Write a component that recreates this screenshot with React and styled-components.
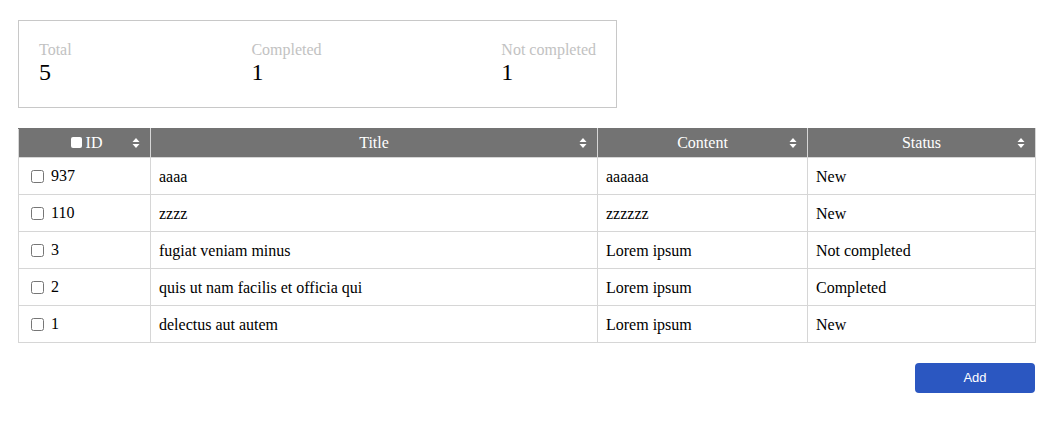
import React from "react";
import styled, { createGlobalStyle } from "styled-components";

const Global = createGlobalStyle`
  html, body { margin: 0; padding: 0; background: #fff; }
  body { font-family: "Liberation Serif", "Times New Roman", serif; color: #000; }
`;

const Page = styled.div`
  padding: 20px 26px 20px 18px;
  display: flex;
  flex-direction: column;
`;

const Stats = styled.div`
  width: 599px;
  height: 88px;
  box-sizing: border-box;
  border: 1px solid #c8c8c8;
  padding: 20px 20px 0 20px;
  display: flex;
  justify-content: space-between;
  align-items: flex-start;
`;

const Stat = styled.div`
  display: flex;
  flex-direction: column;
`;

const StatLabel = styled.span`
  font-size: 16px;
  line-height: 18px;
  color: #c2c2c2;
`;

const StatValue = styled.span`
  font-size: 24px;
  line-height: 26px;
`;

const Table = styled.table`
  margin-top: 20px;
  width: 1017px;
  border-collapse: collapse;
  table-layout: fixed;
  font-size: 16px;
`;

const Th = styled.th`
  position: relative;
  height: 29px;
  padding: 0 8px;
  box-sizing: border-box;
  background: #737373;
  color: #fff;
  font-weight: normal;
  text-align: center;
  border: 1px solid #d6d6d6;
  border-top-color: #737373;
`;

const HeadInner = styled.span`
  display: inline-flex;
  align-items: center;
  gap: 4px;
  margin-left: 4px;
`;

const HeadBox = styled.span`
  display: inline-block;
  width: 11px;
  height: 11px;
  border-radius: 2px;
  background: #fff;
`;

const SortIcon = styled.svg`
  position: absolute;
  right: 10px;
  top: 50%;
  transform: translateY(-50%);
`;

const Td = styled.td`
  height: 37px;
  box-sizing: border-box;
  padding: 1px 8px 0;
  border: 1px solid #d6d6d6;
  vertical-align: middle;
`;

const IdCell = styled.span`
  display: inline-flex;
  align-items: center;
  gap: 7px;
`;

const Check = styled.input`
  margin: 1px 0 0 4px;
  width: 13px;
  height: 13px;
`;

const Footer = styled.div`
  display: flex;
  justify-content: flex-end;
  margin-top: 20px;
  width: 1017px;
`;

const AddButton = styled.button`
  width: 120px;
  height: 30px;
  border: none;
  border-radius: 4px;
  background: #2b57c1;
  color: #fff;
  font-family: "Liberation Sans", Arial, sans-serif;
  font-size: 13px;
  padding: 0 0 1px;
  cursor: pointer;
`;

const Sort = () => (
  <SortIcon width="8" height="11" viewBox="0 0 8 11">
    <path d="M4 0.5 L7.5 4.5 L0.5 4.5 Z" fill="#fff" />
    <path d="M4 10.5 L7.5 6.5 L0.5 6.5 Z" fill="#fff" />
  </SortIcon>
);

const rows = [
  { id: 937, title: "aaaa", content: "aaaaaa", status: "New" },
  { id: 110, title: "zzzz", content: "zzzzzz", status: "New" },
  { id: 3, title: "fugiat veniam minus", content: "Lorem ipsum", status: "Not completed" },
  { id: 2, title: "quis ut nam facilis et officia qui", content: "Lorem ipsum", status: "Completed" },
  { id: 1, title: "delectus aut autem", content: "Lorem ipsum", status: "New" },
];

export default function App() {
  return (
    <>
      <Global />
      <Page>
        <Stats>
          <Stat>
            <StatLabel>Total</StatLabel>
            <StatValue>5</StatValue>
          </Stat>
          <Stat>
            <StatLabel>Completed</StatLabel>
            <StatValue>1</StatValue>
          </Stat>
          <Stat>
            <StatLabel>Not completed</StatLabel>
            <StatValue>1</StatValue>
          </Stat>
        </Stats>
        <Table>
          <colgroup>
            <col style={{ width: 132 }} />
            <col style={{ width: 447 }} />
            <col style={{ width: 210 }} />
            <col style={{ width: 228 }} />
          </colgroup>
          <thead>
            <tr>
              <Th>
                <HeadInner>
                  <HeadBox />
                  ID
                </HeadInner>
                <Sort />
              </Th>
              <Th>
                Title
                <Sort />
              </Th>
              <Th>
                Content
                <Sort />
              </Th>
              <Th>
                Status
                <Sort />
              </Th>
            </tr>
          </thead>
          <tbody>
            {rows.map((r) => (
              <tr key={r.id}>
                <Td>
                  <IdCell>
                    <Check type="checkbox" />
                    {r.id}
                  </IdCell>
                </Td>
                <Td>{r.title}</Td>
                <Td>{r.content}</Td>
                <Td>{r.status}</Td>
              </tr>
            ))}
          </tbody>
        </Table>
        <Footer>
          <AddButton>Add</AddButton>
        </Footer>
      </Page>
    </>
  );
}
